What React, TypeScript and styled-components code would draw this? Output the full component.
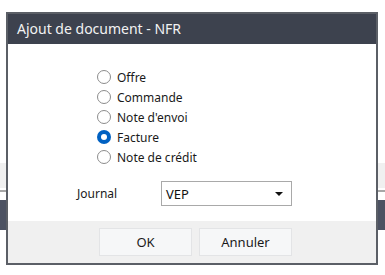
import React, { useState } from "react";
import styled, { createGlobalStyle } from "styled-components";

const Global = createGlobalStyle`
  html, body { margin: 0; padding: 0; background: #ffffff; }
  body { font-family: "Segoe UI", "Noto Sans", "Open Sans", sans-serif; }
  * { box-sizing: border-box; }
`;

const Page = styled.div`
  width: 385px;
  height: 275px;
  padding: 12px 0 0 6px;
  background: linear-gradient(
    to bottom,
    #ffffff 0px,
    #ffffff 163px,
    #f0f0f0 163px,
    #f0f0f0 188px,
    #ffffff 188px,
    #ffffff 190px,
    #a7a7a7 190px,
    #a7a7a7 192px,
    #ffffff 192px,
    #ffffff 200px,
    #4c5262 200px,
    #4c5262 230px,
    #ffffff 230px
  );
`;

const Dialog = styled.div`
  width: 372px;
  height: 253px;
  border: 2px solid #5b5f66;
  background: #ffffff;
  display: flex;
  flex-direction: column;
`;

const TitleBar = styled.div`
  height: 30px;
  background: #3d424e;
  color: #f2f2f2;
  font-size: 14px;
  display: flex;
  align-items: center;
  padding-left: 9px;
  padding-bottom: 1px;
`;

const Body = styled.div`
  flex: 1;
  display: flex;
  flex-direction: column;
  padding: 23px 0 0 0;
`;

const RadioGroup = styled.div`
  display: flex;
  flex-direction: column;
  padding-left: 89px;
`;

const RadioRow = styled.label`
  display: flex;
  align-items: center;
  height: 20px;
  font-size: 12px;
  color: #1a1a1a;
  cursor: default;
`;

const RadioCircle = styled.span<{ $checked: boolean }>`
  width: 14px;
  height: 14px;
  border-radius: 50%;
  margin-right: 6px;
  flex: none;
  display: flex;
  align-items: center;
  justify-content: center;
  background: ${(p) => (p.$checked ? "#0061c2" : "#ffffff")};
  border: ${(p) => (p.$checked ? "none" : "1px solid #8c8c8c")};
  &::after {
    content: "";
    display: ${(p) => (p.$checked ? "block" : "none")};
    width: 6px;
    height: 6px;
    border-radius: 50%;
    background: #ffffff;
  }
`;

const JournalRow = styled.div`
  display: flex;
  align-items: center;
  margin-top: 14px;
  padding-left: 69px;
`;

const JournalLabel = styled.span`
  width: 84px;
  font-size: 12px;
  color: #1a1a1a;
`;

const Select = styled.div`
  width: 131px;
  height: 25px;
  border: 1px solid #a9a9a9;
  display: flex;
  align-items: center;
  justify-content: space-between;
  padding: 0 8px 0 4px;
  font-size: 13px;
  color: #111;
`;

const Arrow = styled.span`
  width: 0;
  height: 0;
  border-left: 4px solid transparent;
  border-right: 4px solid transparent;
  border-top: 4px solid #111;
`;

const Footer = styled.div`
  height: 42px;
  background: #f0f0f0;
  display: flex;
  align-items: center;
  justify-content: center;
  gap: 7px;
  padding: 0 0 1px 7px;
`;

const Button = styled.button`
  width: 93px;
  height: 28px;
  background: #f6f7f8;
  border: 1px solid #e3e4e6;
  font-family: inherit;
  font-size: 13px;
  color: #1a1a1a;
  padding: 0;
`;

const options = ["Offre", "Commande", "Note d'envoi", "Facture", "Note de crédit"];

export default function App() {
  const [sel, setSel] = useState("Facture");
  return (
    <Page>
      <Global />
      <Dialog>
        <TitleBar>Ajout de document - NFR</TitleBar>
        <Body>
          <RadioGroup>
            {options.map((o) => (
              <RadioRow key={o} onClick={() => setSel(o)}>
                <RadioCircle $checked={sel === o} />
                {o}
              </RadioRow>
            ))}
          </RadioGroup>
          <JournalRow>
            <JournalLabel>Journal</JournalLabel>
            <Select>
              VEP
              <Arrow />
            </Select>
          </JournalRow>
        </Body>
        <Footer>
          <Button>OK</Button>
          <Button>Annuler</Button>
        </Footer>
      </Dialog>
    </Page>
  );
}
